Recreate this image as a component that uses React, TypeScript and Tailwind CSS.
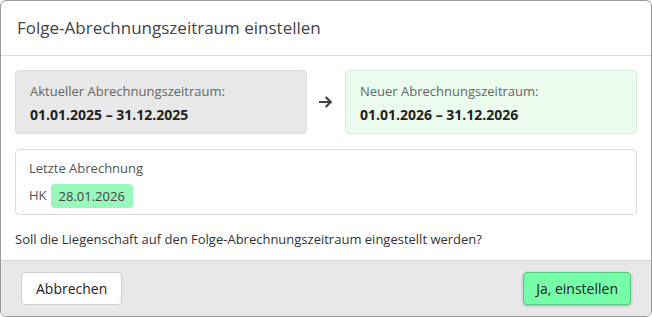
import React from 'react';

export default function App() {
  return (
    <div className="h-[317px] w-[652px] bg-white" style={{ fontFamily: '"Open Sans", "Liberation Sans", sans-serif' }}>
      <div className="flex h-full flex-col overflow-hidden rounded-md border border-[#9a9a9a] bg-white text-[#333]">
        {/* Header */}
        <div className="flex h-[55px] shrink-0 items-center border-b border-[#dcdcdc] pl-[16px]">
          <h1 className="text-[17px] text-[#444]">Folge-Abrechnungszeitraum einstellen</h1>
        </div>

        {/* Body */}
        <div className="flex flex-1 flex-col px-[14px] pt-[14px]">
          <div className="grid grid-cols-[1fr_14px_1fr] items-center gap-[12px]">
            <div className="h-[64px] rounded border border-[#dcdcdc] bg-[#e8e8e8] px-[14px] pt-[10px]">
              <div className="text-[13px] leading-[20px] text-[#666]">Aktueller Abrechnungszeitraum:</div>
              <div className="mt-[4px] text-[14px] font-bold leading-[20px] text-[#222]">01.01.2025 – 31.12.2025</div>
            </div>
            <div className="flex justify-center">
              <svg width="15" height="14" viewBox="0 0 15 14" fill="none" stroke="#444" strokeWidth="2.4" strokeLinecap="square">
                <path d="M1 7 H12" />
                <path d="M8 2.5 L12.5 7 L8 11.5" />
              </svg>
            </div>
            <div className="h-[64px] rounded border border-[#d6efdc] bg-[#ebfcef] px-[14px] pt-[10px]">
              <div className="text-[13px] leading-[20px] text-[#666]">Neuer Abrechnungszeitraum:</div>
              <div className="mt-[4px] text-[14px] font-bold leading-[20px] text-[#222]">01.01.2026 – 31.12.2026</div>
            </div>
          </div>

          <div className="mt-[15px] h-[66px] rounded border border-[#dcdcdc] bg-white px-[13px] pt-[8px]">
            <div className="text-[13px] leading-[20px] text-[#555]">Letzte Abrechnung</div>
            <div className="mt-[6px] flex items-center gap-[4px]">
              <span className="text-[13px] text-[#555]">HK</span>
              <span className="rounded bg-[#98f7bb] px-[8px] py-[2px] text-[13px] leading-[20px] text-[#444]">28.01.2026</span>
            </div>
          </div>

          <p className="mt-[14px] text-[13px] leading-[20px] text-[#333]">
            Soll die Liegenschaft auf den Folge-Abrechnungszeitraum eingestellt werden?
          </p>
        </div>

        {/* Footer */}
        <div className="flex h-[56px] shrink-0 items-center justify-between border-t border-[#d6d6d6] bg-[#e8e8e8] px-[20px]">
          <button className="h-[33px] rounded-sm border border-[#cfcfcf] bg-white px-[14px] text-[14px] text-[#222]">
            Abbrechen
          </button>
          <button className="h-[33px] rounded-sm border border-[#55c97f] bg-[#76fda8] px-[12px] text-[14px] text-[#222] shadow-[0_1px_3px_rgba(0,0,0,0.25)]">
            Ja, einstellen
          </button>
        </div>
      </div>
    </div>
  );
}
